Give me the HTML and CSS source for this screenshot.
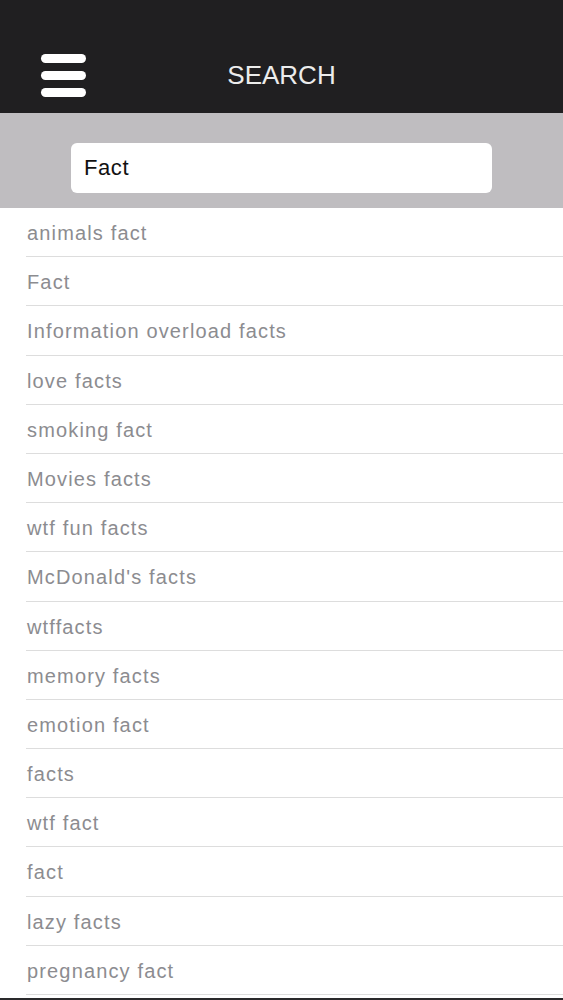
FILE: index.html
```html
<!DOCTYPE html>
<html lang="en">
<head>
<meta charset="utf-8">
<title>Search</title>
<link rel="stylesheet" href="styles.css">
</head>
<body>
<div class="app">
  <header class="topbar">
    <button class="menu" aria-label="Menu">
      <span class="bar"></span>
      <span class="bar"></span>
      <span class="bar"></span>
    </button>
    <h1 class="title">SEARCH</h1>
  </header>
  <div class="searcharea">
    <div class="searchbox">Fact</div>
  </div>
  <ul class="results">
    <li>animals fact</li>
    <li>Fact</li>
    <li>Information overload facts</li>
    <li>love facts</li>
    <li>smoking fact</li>
    <li>Movies facts</li>
    <li>wtf fun facts</li>
    <li>McDonald's facts</li>
    <li>wtffacts</li>
    <li>memory facts</li>
    <li>emotion fact</li>
    <li>facts</li>
    <li>wtf fact</li>
    <li>fact</li>
    <li>lazy facts</li>
    <li>pregnancy fact</li>
  </ul>
  <div class="bottomedge"></div>
</div>
</body>
</html>
```

FILE: styles.css
```css
* { box-sizing: border-box; }
html, body {
  margin: 0;
  padding: 0;
  background: #ffffff;
  font-family: "Liberation Sans", Arial, sans-serif;
  overflow: hidden;
  height: 1000px;
}
.app {
  display: flex;
  flex-direction: column;
  width: 563px;
}
.topbar {
  height: 113px;
  background: #201f21;
  display: flex;
  align-items: flex-end;
  padding: 0 0 16px 41px;
  position: relative;
}
.menu {
  border: 0;
  background: transparent;
  padding: 0;
  width: 45px;
  display: flex;
  flex-direction: column;
  gap: 8px;
  cursor: pointer;
}
.bar {
  display: block;
  width: 45px;
  height: 9px;
  border-radius: 5px;
  background: #ffffff;
}
.title {
  margin: 0;
  position: absolute;
  left: 0;
  right: 0;
  top: 59px;
  text-align: center;
  font-weight: normal;
  font-size: 26px;
  line-height: 32px;
  color: #ececec;
  pointer-events: none;
}
.searcharea {
  height: 95px;
  background: #bfbdc0;
  padding: 30px 71px 0 71px;
}
.searchbox {
  height: 50px;
  background: #ffffff;
  border-radius: 6px;
  padding: 0 13px;
  display: flex;
  align-items: center;
  font-size: 22px;
  letter-spacing: 0.6px;
  color: #111111;
}
.results {
  list-style: none;
  margin: 0;
  padding: 0 0 0 26px;
}
.results li {
  height: 49.2px;
  line-height: 48.2px;
  border-bottom: 1px solid #dddddd;
  font-size: 20px;
  letter-spacing: 1.15px;
  color: #8c8c90;
  padding-left: 1px;
  padding-top: 1px;
}
.bottomedge {
  height: 6px;
  margin-top: 3px;
  background: #2a2a2c;
}
```
